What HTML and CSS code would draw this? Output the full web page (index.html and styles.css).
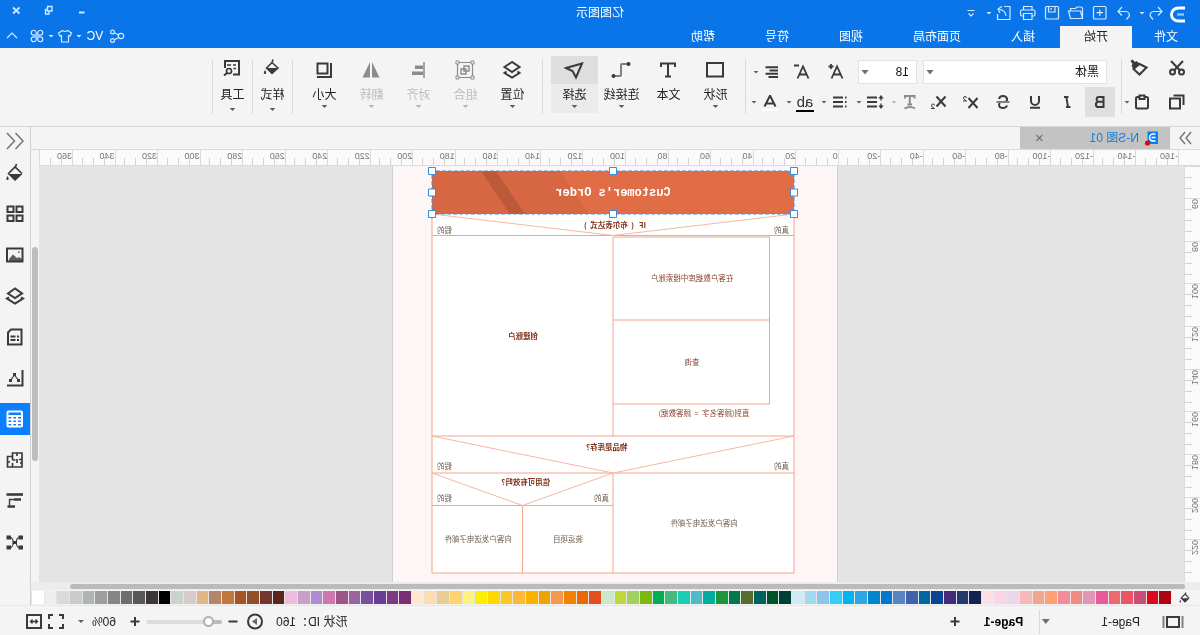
FILE: index.html
```html
<!DOCTYPE html>
<html lang="zh-CN">
<head>
<meta charset="utf-8">
<title>亿图图示</title>
<link rel="stylesheet" href="styles.css">
</head>
<body>
<div class="app">
  <header class="top">
    <div class="titlebar">
      <div class="quick">
        <svg class="logo" viewBox="0 0 21 20"><path d="M3 5h6.500a6 5.500 0 0 1 0 13H3" stroke-width="2.800"/><path class="dim" d="M4 11.500h7" stroke-width="2.400"/></svg>
        <button class="q undo" aria-label="撤销"><svg viewBox="0 0 20 20"><path d="M8 4L4 8.500L8 12.500M4.500 8.500h7.500a3.500 3.500 0 0 1 3.500 5l-2.500 3"/></svg></button>
        <button class="qd" aria-label="撤销列表"><i class="caret"></i></button>
        <button class="q" aria-label="重做"><svg viewBox="0 0 20 20"><path d="M12 4l4 4.500l-4 4M15.500 8.500H8.500a3.500 3.500 0 0 0-3.500 5L7.500 16.500"/></svg></button>
        <button class="q" aria-label="新建"><svg viewBox="0 0 20 20"><rect x="4" y="3.500" width="12.500" height="12.500" rx="1"/><path d="M10.200 6.500v6.500M7 9.700h6.500"/></svg></button>
        <button class="q" aria-label="打开"><svg viewBox="0 0 20 20"><path d="M3.500 15.500V6q0-2 2-2h3.500l1.500 1.500h5v2.500M3.500 15.500L5.500 8h12l-2 7.500z"/></svg></button>
        <button class="q" aria-label="保存"><svg viewBox="0 0 20 20"><rect x="3.500" y="3.500" width="13" height="12.500" rx="1"/><path d="M7 3.500v5.500h6.500v-5.500M11 5v2"/></svg></button>
        <button class="q" aria-label="打印"><svg viewBox="0 0 20 20"><path d="M6 7v-3.500h8.500V7M6 13H4.500q-1.500 0-1.500-1.500V8.500q0-1.500 1.500-1.500h11.500q1.500 0 1.500 1.500v3q0 1.500-1.500 1.500h-1.500M6 10.500h8.500v6H6z"/></svg></button>
        <button class="q" aria-label="导出"><svg viewBox="0 0 20 20"><path d="M10 3.500H4v13h12.500V11M8 13q0-5.500 7.500-7M12 3.500l4 2.500l-2 4"/></svg></button>
        <button class="qd" aria-label="导出列表"><i class="caret"></i></button>
        <button class="q" aria-label="自定义"><svg viewBox="0 0 20 20"><path d="M6.500 7.500h7M7.500 10.500l2.500 2.500l2.500-2.500"/></svg></button>
      </div>
      <h1 class="title">亿图图示</h1>
      <div class="win">
        <button aria-label="最小化"><svg viewBox="0 0 20 20"><path d="M7.500 12.500h5.500" stroke-width="2"/></svg></button>
        <button aria-label="还原"><svg viewBox="0 0 20 20"><path d="M7.500 6.500h4.500v4.500H7.500zM9 11.500v2.500h-3.500v-4.500h2" transform="matrix(-1 0 0 1 19 0)" stroke-width="1.300"/></svg></button>
        <button aria-label="关闭"><svg viewBox="0 0 20 20"><path d="M6.500 7.500l6.500 6M13 7.500l-6.500 6" stroke-width="1.800"/></svg></button>
      </div>
    </div>
    <nav class="menubar">
      <button class="menu file">文件</button>
      <button class="menu on">开始</button>
      <button class="menu">插入</button>
      <button class="menu">页面布局</button>
      <button class="menu">视图</button>
      <button class="menu">符号</button>
      <button class="menu">帮助</button>
      <div class="account">
        <button class="a" aria-label="分享"><svg viewBox="0 0 20 20"><circle cx="6" cy="10" r="2.700"/><circle cx="14.500" cy="6" r="1.900"/><circle cx="14.500" cy="14.500" r="1.900"/><path d="M8.500 9l4.200-2.200M8.200 11.500l4.500 2.200"/></svg></button>
        <button class="user">VC</button>
        <button class="ad" aria-label="用户菜单"><i class="caret"></i></button>
        <button class="a shirt" aria-label="主题"><svg viewBox="0 0 20 20"><path d="M7.500 4.500q2.500 2 5 0l4 2.500l-1.500 3l-1.500-.5v6.500h-7V9.500l-1.500.5l-1.500-3z"/></svg></button>
        <button class="ad" aria-label="主题列表"><i class="caret"></i></button>
        <button class="a" aria-label="应用"><svg viewBox="0 0 20 20"><path d="M9.200 9.200H6.300a2.500 2.500 0 1 1 2.900-2.900zM10.800 9.200h2.900a2.500 2.500 0 1 0-2.900-2.900zM9.200 10.800H6.300a2.500 2.500 0 1 0 2.900 2.900zM10.800 10.800h2.900a2.500 2.500 0 1 1-2.900 2.900z"/></svg></button>
        <button class="a fold" aria-label="收起"><svg viewBox="0 0 20 20"><path d="M5 12l5-5l5 5"/></svg></button>
      </div>
    </nav>
  </header>

  <section class="ribbon">
    <div class="clip">
      <div class="cliprow">
        <button class="b" aria-label="剪切"><svg viewBox="0 0 20 20"><circle cx="5.500" cy="14" r="2.500"/><circle cx="14.500" cy="14" r="2.500"/><path d="M4 3l9 9.500M16 3L7 12.500"/></svg></button>
        <button class="b" aria-label="格式刷"><svg viewBox="0 0 20 20"><path d="M2.500 9.500l7-3.500l6 5l-6 5.500z"/><path class="f" d="M9.500 5.500l3-2.500l1.500 1l2.500-2.500l2 1.500l-2 3l1 1.500l-2 4z"/></svg></button>
      </div>
      <div class="cliprow">
        <button class="b" aria-label="复制"><svg viewBox="0 0 20 20"><path d="M7 6.500h10v10H7zM3.500 13V3.500h10"/></svg></button>
        <button class="b paste" aria-label="粘贴"><svg viewBox="0 0 20 20"><rect x="4" y="5" width="12" height="11.500" rx="1.500"/><path class="w" d="M7.500 3.500h5v3.500h-5z"/></svg></button>
        <button class="d" aria-label="粘贴选项"><i class="caret"></i></button>
      </div>
    </div>
    <span class="sep"></span>
    <div class="font">
      <div class="row first">
        <label class="combo family"><select aria-label="字体"><option>黑体</option></select><i class="caret big"></i></label>
        <label class="combo size"><select aria-label="字号"><option>18</option></select><i class="caret big"></i></label>
        <button class="b wide grow" aria-label="增大字号"><svg viewBox="0 0 20 20"><path d="M3.500 16.500L9 4.500l5.500 12M5.500 12.500h7M12.500 4.500h5M15 2v5" stroke-width="1.800"/></svg></button>
        <button class="b wide" aria-label="减小字号"><svg viewBox="0 0 20 20"><path d="M3.500 16.500L9 4.500l5.500 12M5.500 12.500h7M13 3.500h5" stroke-width="1.800"/></svg></button>
        <span class="pair"><button class="b" aria-label="对齐"><svg viewBox="0 0 20 20"><path d="M4 5.200h12.500M4 8.500h8.500M4 11.800h12.500M4 15.100h9.500"/></svg></button><button class="d" aria-label="对齐选项"><i class="caret"></i></button></span>
      </div>
      <div class="row">
        <button class="b bold" aria-label="加粗"><svg viewBox="0 0 20 20"><path d="M6.500 5h4.500a2.400 2.400 0 0 1 0 4.800H6.500zM6.500 9.800h5a2.600 2.600 0 0 1 0 5.200h-5z" stroke-width="2"/></svg></button>
        <button class="b wide i" aria-label="斜体"><svg viewBox="0 0 20 20"><path d="M8.500 5h4.500M10.700 5L9 15M6.500 15h4.500" stroke-width="1.900"/></svg></button>
        <button class="b wide" aria-label="下划线"><svg viewBox="0 0 20 20"><path d="M6 4v5a4 4 0 0 0 8 0V4M5 15.800h10"/></svg></button>
        <button class="b wide" aria-label="删除线"><svg viewBox="0 0 20 20"><path d="M14 7q-.5-3-4-3t-4 3t3 3M13 11q1.500 1 .8 3T10 16T6 13.500"/><path class="g" d="M3.500 10h13"/></svg></button>
        <button class="b wide" aria-label="上标"><svg viewBox="0 0 20 20"><path d="M3.500 6l9 10M12.500 6l-9 10"/><path d="M14.500 6q0-1.500 1.500-1.500t1.500 1.500t-3 3h3.500" stroke-width="1"/></svg></button>
        <button class="b wide" aria-label="下标"><svg viewBox="0 0 20 20"><path d="M3.500 4.500l9 10M12.500 4.500l-9 10"/><path d="M14.500 13.500q0-1.500 1.500-1.500t1.500 1.500t-3 3h3.500" stroke-width="1"/></svg></button>
        <span class="pair off"><button class="b" aria-label="文字效果"><svg viewBox="0 0 20 20"><path d="M5.500 6.500v-2.500h9.500v2.500M10.200 4v8.500M8 12.500h4.500M5 16.500q5-3 10.500 0"/></svg></button><button class="d" aria-label="文字效果选项"><i class="caret"></i></button></span>
        <span class="pair"><button class="b" aria-label="行距"><svg viewBox="0 0 20 20"><path d="M8 5.500h10M8 10h10M8 14.500h10"/><path d="M4 4.500v4M4 11.500v4" stroke-width="1.400"/><path class="f" d="M4 3l2.700 3.500H1.300zM4 17l2.700-3.500H1.300z"/></svg></button><button class="d" aria-label="行距选项"><i class="caret"></i></button></span>
        <span class="pair"><button class="b" aria-label="列表"><svg viewBox="0 0 20 20"><path d="M7 5.500h10M7 10h10M7 14.500h10"/><path d="M3.500 5.500h1.500M3.500 10h1.500M3.500 14.500h1.500"/></svg></button><button class="d" aria-label="列表选项"><i class="caret"></i></button></span>
        <span class="pair"><button class="b glyph" aria-label="突出显示">ab</button><button class="d" aria-label="突出显示选项"><i class="caret"></i></button></span>
        <span class="pair"><button class="b" aria-label="字体颜色"><svg viewBox="0 0 20 20"><path d="M4.500 14.500L9.800 4h.4L15.500 14.500M6 11.500h8"/><path d="M2 18h16" stroke="#fff"/></svg></button><button class="d" aria-label="字体颜色选项"><i class="caret"></i></button></span>
      </div>
    </div>
    <span class="sep"></span>
    <div class="tools">
      <button class="tool"><svg viewBox="0 0 20 20"><rect x="2" y="3" width="16" height="13.500"/></svg>形状<i class="caret"></i></button>
      <button class="tool"><svg viewBox="0 0 20 20"><path d="M3 7V3.500h14V7M10 3.500v13M7 16.500h6"/></svg>文本</button>
      <button class="tool"><svg viewBox="0 0 20 20"><path class="g" d="M4 4h5q1 0 1 1v10q0 1 1 1h5"/><circle class="f" cx="2.500" cy="4" r="2"/><circle class="f" cx="17.500" cy="16" r="2"/></svg>连接线<i class="caret"></i></button>
      <button class="tool sel"><svg viewBox="0 0 20 20"><path d="M2 3.500l16 4.500l-6.500 3L8 17.500z"/></svg>选择<i class="caret"></i></button>
    </div>
    <span class="sep"></span>
    <div class="tools">
      <button class="tool"><svg viewBox="0 0 20 20"><path d="M10 2l7.500 5L10 12L2.500 7zM4.500 11.500l-2 1.500l7.500 4.500l7.500-4.500l-2-1.500"/></svg>位置<i class="caret"></i></button>
      <button class="tool off" disabled><svg viewBox="0 0 20 20"><path d="M2.500 2.500h15v15h-15z" stroke-width="1.200"/><path d="M6 6h5v5H6zM9 9h5v5H9z" stroke-width="1.400"/><path class="w" d="M1 1h3v3H1zM16 1h3v3h-3zM1 16h3v3H1zM16 16h3v3h-3z" stroke-width="1"/></svg>组合<i class="caret"></i></button>
      <button class="tool off" disabled><svg viewBox="0 0 20 20"><path d="M4 2v16" stroke-width="1.500"/><path d="M5 7.200h8M5 13.200h11" stroke-width="3.500"/></svg>对齐<i class="caret"></i></button>
      <button class="tool off" disabled><svg viewBox="0 0 20 20"><path class="f" d="M9 2v15.500H1.500zM11 2v15.500h7.500z"/></svg>翻转<i class="caret"></i></button>
      <button class="tool"><svg viewBox="0 0 20 20"><path d="M6.500 3.500h10v10h-10zM3 3v14h14"/></svg>大小<i class="caret"></i></button>
    </div>
    <span class="sep"></span>
    <div class="tools"><button class="tool slim"><svg viewBox="0 0 20 20"><path d="M9 1.500l1 3M3.500 10.500L10 4.500l6 6" stroke-width="1.600"/><path class="f" d="M3 10h13.500L10 16.500zM17 12q2.500 4 0 4t0-4"/></svg>样式<i class="caret"></i></button></div>
    <span class="sep"></span>
    <div class="tools"><button class="tool slim"><svg viewBox="0 0 20 20"><path d="M9 16.500H3V3h14v7" /><path d="M6 7h3M11 7h4M6 10.500h2.500" stroke-width="1.400"/><circle cx="13" cy="13" r="2.500" stroke-width="1.700"/><path d="M15 15l3 2.500"/></svg>工具<i class="caret"></i></button></div>
    <span class="sep"></span>
  </section>

  <div class="body">
    <main class="work">
      <div class="tabs">
        <button class="expand" aria-label="展开符号库"><svg viewBox="0 0 20 20"><path d="M4 4l5 6l-5 6M10 4l5 6l-5 6"/></svg></button>
        <div class="tab">
          <svg class="doc" viewBox="0 0 16 16"><path d="M2 1.500h10.500v12.500H2z" fill="#0a7cf5"/><path d="M4.500 4h2.500a3.200 3.200 0 0 1 0 7H4.500M4.500 7.500h4" fill="none" stroke="#fff" stroke-width="1.400"/><circle cx="12.500" cy="13" r="2.600" fill="#f30000"/></svg>
          <a href="#sheet">N-S图 01</a>
          <button class="close" aria-label="关闭标签">✕</button>
        </div>
      </div>
      <div class="hruler">
        <span>-160</span><span>-140</span><span>-120</span><span>-100</span><span>-80</span><span>-60</span><span>-40</span><span>-20</span><span>0</span><span>20</span><span>40</span><span>60</span><span>80</span><span>100</span><span>120</span><span>140</span><span>160</span><span>180</span><span>200</span><span>220</span><span>240</span><span>260</span><span>280</span><span>300</span><span>320</span><span>340</span><span>360</span>
      </div>
      <div class="stage">
        <div class="vruler"><span></span><span><b>60</b></span><span><b>80</b></span><span><b>100</b></span><span><b>120</b></span><span><b>140</b></span><span><b>160</b></span><span><b>180</b></span><span><b>200</b></span><span><b>220</b></span></div>
        <div class="canvas">
          <svg class="sheet" id="sheet" viewBox="0 0 892 832" preserveAspectRatio="xMidYMin meet">
            <rect class="paper" width="892" height="832"/>
            <path d="M1 0V832M891 0V832" stroke="#cfcfcf" stroke-width="2"/>
            <rect x="88" y="96" width="724" height="718" fill="#fff"/>
            <g class="ln">
              <path d="M88 96V814H812V96M88 139H812M88 540H812M88 614H812M450 679H812M450 476V540M450 614V814M631 679V814"/>
              <path class="thin" d="M88 96L450 139L812 96M88 540L450 614L812 540M450 614L631 679L812 614"/>
              <path fill="#fff" d="M137 142H450V476H137zM137 308H450"/>
            </g>
            <rect x="88" y="10" width="724" height="86" fill="#e16d46"/>
            <path d="M556 10H812V96H500z" fill="#d66742"/>
            <path d="M684 10H714L656 96H626z" fill="#bb5938"/>
            <text class="head" x="450" y="60">Customer's Order</text>
            <g class="cap">
              <text x="446" y="123">IF&nbsp;&nbsp; (&nbsp; 布尔表达式&nbsp; )</text>
              <text x="466" y="567">物品是库存？</text>
              <text x="628" y="638">信用可有效吗？</text>
              <text x="630" y="346">创建账户</text>
            </g>
            <g class="red">
              <text x="292" y="230">在客户数据库中搜索账户</text>
              <text x="292" y="398">查询</text>
              <text x="268" y="500">直到(顾客名字&nbsp; =&nbsp; 顾客数据)</text>
            </g>
            <g class="txt">
              <text x="113" y="134">真的</text><text x="787" y="134">假的</text>
              <text x="113" y="606">真的</text><text x="787" y="606">假的</text>
              <text x="473" y="670">真的</text><text x="787" y="670">假的</text>
              <text x="268" y="719">向客户发送电子邮件</text>
              <text x="540" y="751">装运项目</text>
              <text x="720" y="751">向客户发送电子邮件</text>
            </g>
            <rect class="pick" x="88" y="10" width="724" height="86"/>
            <path class="knob" d="M81 3h14v14h-14zM443 3h14v14h-14zM805 3h14v14h-14zM81 46h14v14h-14zM805 46h14v14h-14zM81 89h14v14h-14zM443 89h14v14h-14zM805 89h14v14h-14z"/>
          </svg>
        </div>
        <div class="vscroll"><i></i></div>
      </div>
      <div class="hscroll"><i></i></div>
      <div class="palette">
        <button class="pour" aria-label="填充"><svg viewBox="0 0 20 20"><path d="M9 1v3M3 10.500l7-7l7 7" stroke-width="2"/><path class="f" d="M2.500 10.500h15L10 18zM18 13q2.500 4.500 0 4.500t0-4.500"/></svg></button>
        <span class="sw"><i style="background:#b10413"></i><i style="background:#d90a1e"></i><i style="background:#c94f78"></i><i style="background:#e85565"></i><i style="background:#ea6a70"></i><i style="background:#e85a9b"></i><i style="background:#e196b6"></i><i style="background:#f08c84"></i><i style="background:#f28c98"></i><i style="background:#ffa075"></i><i style="background:#f0a88c"></i><i style="background:#f7b9b8"></i><i style="background:#ead6ea"></i><i style="background:#fed3e7"></i><i style="background:#fedfe6"></i><i style="background:#12234f"></i><i style="background:#23386b"></i><i style="background:#442a78"></i><i style="background:#0a4490"></i><i style="background:#0066a4"></i><i style="background:#4062ad"></i><i style="background:#5884c4"></i><i style="background:#0078d0"></i><i style="background:#0086cc"></i><i style="background:#2fa6e0"></i><i style="background:#00b4f0"></i><i style="background:#33ccfb"></i><i style="background:#8cc4ee"></i><i style="background:#a0daf0"></i><i style="background:#cdebf7"></i><i style="background:#004034"></i><i style="background:#00522b"></i><i style="background:#00615e"></i><i style="background:#566b2c"></i><i style="background:#00784a"></i><i style="background:#1e943c"></i><i style="background:#00aea0"></i><i style="background:#4ebcc4"></i><i style="background:#1acdb4"></i><i style="background:#46b97f"></i><i style="background:#00b050"></i><i style="background:#7db80e"></i><i style="background:#a2d062"></i><i style="background:#bfd83e"></i><i style="background:#cce8c8"></i><i style="background:#e24e1c"></i><i style="background:#ec6800"></i><i style="background:#f08300"></i><i style="background:#f3994f"></i><i style="background:#f0a300"></i><i style="background:#fdb000"></i><i style="background:#feb835"></i><i style="background:#fbc72f"></i><i style="background:#ffd800"></i><i style="background:#ffee00"></i><i style="background:#fbf37e"></i><i style="background:#ffd470"></i><i style="background:#e9cb96"></i><i style="background:#ffdcae"></i><i style="background:#ffe8d0"></i><i style="background:#7a2f74"></i><i style="background:#7d3a80"></i><i style="background:#6a3d94"></i><i style="background:#77519b"></i><i style="background:#9a659f"></i><i style="background:#9d5586"></i><i style="background:#ce78b0"></i><i style="background:#ad8dd1"></i><i style="background:#c79fc9"></i><i style="background:#ebbdda"></i><i style="background:#58261a"></i><i style="background:#74372f"></i><i style="background:#924d29"></i><i style="background:#a85225"></i><i style="background:#c2773c"></i><i style="background:#b38569"></i><i style="background:#dfb885"></i><i style="background:#d6cbc7"></i><i style="background:#c9d3cc"></i><i style="background:#000000"></i><i style="background:#3e3636"></i><i style="background:#575757"></i><i style="background:#6d6d6d"></i><i style="background:#858585"></i><i style="background:#9c9e9e"></i><i style="background:#b0b4b3"></i><i style="background:#c9cccb"></i><i style="background:#dadada"></i><i style="background:#eeeeee"></i><i style="background:#ffffff"></i></span>
      </div>
    </main>
    <aside class="side">
      <button class="more" aria-label="展开面板"><svg viewBox="0 0 20 20"><path d="M9.500 2L2 10l7.500 8M18 2l-7.500 8l7.500 8" stroke-width="1.400"/></svg></button>
      <button aria-label="填充"><svg viewBox="0 0 20 20"><path d="M8.500 1l1.500 4M3 10.500L10 4l7 7" stroke-width="1.700"/><path class="f" d="M2.500 11h14.500l-7 7zM17.500 13q2.500 4 0 4t0-4"/></svg></button>
      <button aria-label="符号"><svg viewBox="0 0 20 20"><path d="M2.500 2.500h6v5.500h-6zM11.500 2.500h6v5.500h-6zM2.500 11.500h6v5.500h-6zM11.500 11.500h6v5.500h-6z"/></svg></button>
      <button aria-label="图片"><svg viewBox="0 0 20 20"><path d="M2.500 3.500h15.500v13H2.500z"/><path class="f" d="M3 16v-2l3-2l2 1l4-3.500l4 4.500v2zM5.500 6.500h1.500v1.500H5.500z" opacity=".8"/></svg></button>
      <button aria-label="图层"><svg viewBox="0 0 20 20"><path d="M10 2.500l7 5L10 12L3 7.500zM4 11.500l-2 1l8 5l8-5l-2-1"/></svg></button>
      <button aria-label="备注"><svg viewBox="0 0 20 20"><path d="M3.500 2.500h10.500l3 3v12H3.500zM6 9.500h2M9.500 9.500h5M6 13h2M9.500 13h5"/></svg></button>
      <button aria-label="图表"><svg viewBox="0 0 20 20"><path d="M2.500 2v15.500H18"/><path d="M6 13l4.500-6l4.500 6" stroke-width="1.200"/><path class="f" d="M9 5h3v3H9zM5 11h3v3H5zM13 11h3v3h-3z"/></svg></button>
      <button class="on" aria-label="表格"><svg viewBox="0 0 20 20"><rect x="3" y="2.500" width="14.500" height="15" rx="1"/><path d="M3 7h14.500M3 10.500h14.500M3 14h14.500M8 7v10M12.700 7v10"/></svg></button>
      <button aria-label="平面图"><svg viewBox="0 0 20 20"><path d="M3 3h9.500v3.500H17.500v10.500H3zM3 9.500h3M8 3v3M8 9v4M3 13h2M12.500 6.500v3.500M9.500 10h3M12.500 13v4M15 12h2.500" stroke-width="1.700"/></svg></button>
      <button aria-label="甘特图"><svg viewBox="0 0 20 20"><path d="M2 3.500h16.500" stroke-width="2.600"/><path d="M4 8.500h7M10 15.500h7.500" stroke-width="2.600"/><path d="M11 8.500h4.500v6" stroke-width="1.400"/></svg></button>
      <button aria-label="思维导图"><svg viewBox="0 0 20 20"><path class="f" d="M2 3.500h4.500v4H2zM14 3.500h4.500v4H14zM2 13.500h4.500v4H2zM14 13.500h4.500v4H14zM8 9h4.500v3H8z"/><path d="M6 5.500q2 0 3 5q-1 5-3 5M14.500 5.500q-2 0-3 5q1 5 3 5" stroke-width="1.200"/></svg></button>
    </aside>
  </div>

  <footer class="status">
    <button class="pages" aria-label="页面视图"><svg viewBox="0 0 22 20"><path d="M5 5h12v10H5z"/><path class="g" d="M1.500 4v12M20.500 4v12"/></svg></button>
    <button class="pg">Page-1</button>
    <button class="list" aria-label="页面列表"><i class="caret big"></i></button>
    <button class="pg cur">Page-1</button>
    <button class="s" aria-label="新增页面"><svg viewBox="0 0 20 20"><path d="M10 5v9M5.500 9.500h9"/></svg></button>
    <span class="info">形状 ID：160</span>
    <button class="s" aria-label="演示"><svg viewBox="0 0 20 20"><circle cx="10" cy="9.500" r="7"/><path class="f" d="M8 6v7l5-3.500z" transform="matrix(1 0 0 1 0 0)" opacity=".75"/></svg></button>
    <button class="s" aria-label="缩小"><svg viewBox="0 0 20 20"><path d="M5.500 9.500h9"/></svg></button>
    <input class="zoom" type="range" min="0" max="100" value="13" aria-label="缩放">
    <button class="s" aria-label="放大"><svg viewBox="0 0 20 20"><path d="M10 5v9M5.500 9.500h9"/></svg></button>
    <button class="pct">60%<i class="caret"></i></button>
    <button class="s" aria-label="全屏"><svg viewBox="0 0 20 20"><path d="M7 3H3v4M13 3h4v4M7 16H3v-4M13 16h4v-4"/></svg></button>
    <button class="s" aria-label="适合窗口"><svg viewBox="0 0 20 20"><path d="M3 3h14v13H3z"/><path d="M6.500 9.500h7M8.500 7.500l-2 2l2 2M11.500 7.500l2 2l-2 2" stroke-width="1.300"/></svg></button>
  </footer>
</div>
</body>
</html>
```

FILE: styles.css
```css
* { box-sizing: border-box; }

body {
  margin: 0;
  font: 12px/16px "Liberation Sans", "Noto Sans CJK SC", sans-serif;
  color: #222;
  background: #f4f4f4;
}

button {
  margin: 0;
  padding: 0;
  border: 0;
  background: none;
  color: inherit;
  font: inherit;
  flex: none;
  display: flex;
  align-items: center;
  justify-content: center;
}

svg { display: block; flex: none; width: 20px; height: 20px; }

button svg {
  fill: none;
  stroke: #3a3a3a;
  stroke-width: 2;
}
button svg .f { fill: #3a3a3a; stroke: none; }
button svg .g { stroke: #808080; }
button svg .w { fill: #f4f4f4; }

/* The whole interface is shown mirrored, right to left. */
.app {
  height: 100vh;
  display: flex;
  flex-direction: column;
  overflow: hidden;
  transform: scaleX(-1);
}

.caret {
  flex: none;
  width: 6px;
  height: 3px;
  background: #606060;
  clip-path: polygon(0 0, 100% 0, 50% 100%);
}
.caret.big { width: 8px; height: 5px; background: #707070; }

/* Title bar and menus */
.top { background: #0975e9; color: #fff; flex: none; }
.top svg { fill: none; stroke: #d5e9ff; stroke-width: 1.2; }
.top .caret { background: #d5e9ff; }
.titlebar {
  display: grid;
  grid-template-columns: 1fr auto 1fr;
  height: 24px;
}
.quick { display: flex; align-items: center; padding-left: 12px; }
.top .logo { width: 21px; stroke: #fff; }
.logo .dim { stroke: #8ec3fb; }
.q { width: 24px; height: 24px; }
.undo { width: 22px; }
.qd { width: 9px; height: 24px; justify-content: flex-start; }
.title { margin: 0; font-size: 12px; font-weight: 400; line-height: 26px; }
.win { display: flex; justify-content: flex-end; }
.win button { width: 33px; height: 20px; }

.menubar { display: flex; height: 24px; align-items: flex-end; }
.menu { height: 22px; padding: 0 25px; }
.menu.file { padding: 0 22px; }
.menu.on { padding: 0 24px; background: #f4f4f4; color: #222; }
.account { display: flex; margin-left: auto; align-items: center; height: 24px; padding-right: 2px; }
.a { width: 20px; height: 24px; }
.user { width: 24px; height: 24px; }
.ad { width: 8px; height: 24px; }
.shirt { margin-left: 0; }
.fold { margin-left: 5px; }

/* Ribbon */
.ribbon {
  flex: none;
  display: flex;
  height: 79px;
  border-bottom: 1px solid #d6d6d6;
}
.sep { flex: none; width: 1px; height: 54px; margin-top: 12px; background: #dadada; }
.b { width: 26px; height: 30px; }
.d { width: 6px; height: 30px; }
.clip { width: 78px; padding: 3px 0 0 8px; }
.cliprow { display: flex; height: 34px; align-items: center; gap: 8px; }
.cliprow .b { width: 30px; }
.cliprow .paste { width: 24px; }
.cliprow .d { margin-left: -8px; }
.font { width: 375px; padding: 12px 0 0 6px; }
.row { display: flex; align-items: center; height: 30px; }
.row.first { height: 24px; margin: 0 0 3px 8px; }
.row .wide { width: 32px; }
.row.first .wide { width: 34px; }
.row.first .grow { margin-left: 5px; }
.row .bold { width: 30px; background: #dfdfdf; }
.row .i { margin-left: 2px; }
.pair { display: flex; margin-right: 3px; }
.off svg { stroke: #8c8c8c; }
.off svg .f { fill: #8c8c8c; }
.off .caret { background: #b8b8b8; }
.glyph { font-size: 15px; line-height: 14px; color: #333; }
.pair .glyph { width: 18px; height: 18px; margin: 7px 4px 0; border-bottom: 2px solid #000; }
.combo {
  display: flex;
  align-items: center;
  height: 24px;
  padding-left: 7px;
  background: #fff;
  border: 1px solid #e3e3e3;
}
.combo select {
  flex: 1;
  min-width: 0;
  padding: 0;
  border: 0;
  background: none;
  appearance: none;
  font: inherit;
  color: #111;
}
.combo .caret { margin-right: 2px; }
.family { width: 184px; }
.size { width: 59px; margin-left: 6px; }

.tools { display: flex; padding: 8px 8px 0 6px; }
.tool {
  width: 47px;
  height: 57px;
  flex-direction: column;
  justify-content: flex-start;
  padding-top: 4px;
  line-height: 16px;
}
.tool svg { margin-bottom: 7px; }
.tool .caret { margin-top: 2px; }
.tool.off { color: #bdbdbd; }
.tool.sel { background: linear-gradient(#dedede 28px, #ebebeb 28px); }
.tools:has(.slim) { padding: 8px 0 0; }
.tool.slim { width: 39px; padding-top: 2px; }
.slim svg { margin-bottom: 9px; }
.slim .caret { margin-top: 5px; }

/* Workspace */
.body { flex: 1; min-height: 0; display: flex; }
.work { flex: 1; min-width: 0; display: flex; flex-direction: column; }
.tabs { flex: none; display: flex; height: 23px; border-bottom: 1px solid #dadada; }
.expand { width: 30px; }
.expand svg { stroke: #707070; stroke-width: 1.3; }
.tab {
  width: 150px;
  display: flex;
  align-items: center;
  padding: 0 12px 0 10px;
  background: #c3c3c3;
}
.doc { width: 16px; height: 16px; }
.tab a { margin: 0 auto 0 5px; color: #157de0; text-decoration: none; }
.close { width: 16px; font-size: 11px; color: #666; }

.hruler {
  flex: none;
  display: grid;
  grid-template-columns: repeat(26, 1fr) 34px;
  height: 16px;
  margin-right: 8px;
  padding-left: 21px;
  background: #fafafa;
  border-bottom: 1px solid #dcdcdc;
  font-size: 9px;
  line-height: 12px;
  color: #777;
}
.hruler span {
  min-width: 0;
  border-left: 1px solid #dadada;
  background: repeating-linear-gradient(to right, transparent 0 10px, #d2d2d2 10px 11px) left bottom / 100% 7px no-repeat;
  overflow: hidden;
}
.hruler span:last-child { border-right: 1px solid #dadada; }

.stage { flex: 1; min-height: 0; display: flex; }
.vruler {
  flex: none;
  width: 16px;
  display: grid;
  grid-template-rows: 32px repeat(9, 1fr);
  background: #fafafa;
  border-right: 1px solid #dcdcdc;
  font-size: 9px;
  color: #777;
}
.vruler span {
  min-height: 0;
  overflow: hidden;
  border-top: 1px solid #dadada;
  background: repeating-linear-gradient(to bottom, transparent 0 10px, #d2d2d2 10px 11px) right top / 7px 100% no-repeat;
}
.vruler b {
  display: block;
  width: 11px;
  font-weight: 400;
  line-height: 11px;
  writing-mode: vertical-rl;
  transform: rotate(180deg);
}
.canvas {
  flex: 1;
  min-width: 0;
  display: flex;
  justify-content: center;
  padding-right: 7px;
  overflow: hidden;
  background: #e4e4e4;
}
.sheet { width: 446px; height: 416px; }
.paper { fill: #fcf7f6; }
.ln { fill: none; stroke: #f2a48c; stroke-width: 2; }
.thin { stroke: #f5b7a4; }
.sheet text { font: 15px "Noto Sans CJK SC", sans-serif; text-anchor: middle; }
.sheet .head { font: bold 24px "Liberation Mono", monospace; fill: #fff; }
.sheet .cap text { font-weight: 700; fill: #7f3218; }
.red text { fill: #8c4430; }
.txt text { fill: #6b5c48; }
.pick { fill: none; stroke: #4a8fd6; stroke-width: 2; stroke-dasharray: 8 4; }
.knob { fill: #fff; stroke: #2f8de8; stroke-width: 2; }

.vscroll { flex: none; width: 8px; padding: 81px 1px 0; background: #f4f4f4; display: flex; }
.vscroll i { flex: 1; height: 214px; border-radius: 3px; background: #bdbdbd; }
.hscroll { flex: none; height: 8px; padding: 2px 39px 1px 15px; background: #ececec; display: flex; }
.hscroll i { flex: 1; border-radius: 3px; background: #bbb; }
.palette { flex: none; display: flex; height: 15px; }
.pour { width: 29px; }
.pour svg { width: 12px; height: 12px; }
.sw { flex: 1; display: grid; grid-template-columns: repeat(90, 1fr); padding: 1px 0; }
.sw i { border-right: 1px solid #e4e4e4; }

.side {
  flex: none;
  width: 31px;
  display: flex;
  flex-direction: column;
  border-left: 1px solid #d0d0d0;
}
.side button { width: 30px; height: 32px; margin-bottom: 9px; }
.side .more { height: 28px; margin-bottom: 2px; }
.side .more svg { stroke: #707070; }
.side .on { background: #0a7fff; }
.side .on svg { stroke: #fff; }

/* Status bar */
.status {
  flex: none;
  display: flex;
  align-items: center;
  height: 30px;
  padding: 2px 23px 0 16px;
  border-top: 1px solid #e8e8e8;
}
.pages svg { width: 22px; }
.pg { margin-left: 22px; }
.list { width: 12px; height: 24px; margin-left: 50px; border-right: 1px solid #dadada; }
.cur { margin-left: 16px; font-weight: 700; color: #000; }
.status .cur + .s { margin-left: 18px; }
.info { margin-left: auto; padding-right: 10px; }
.s { width: 22px; height: 24px; }
.zoom {
  width: 76px;
  height: 14px;
  margin: 0;
  appearance: none;
  background: none;
}
.zoom::-webkit-slider-runnable-track {
  height: 4px;
  border-radius: 2px;
  background: linear-gradient(to right, #bcbcbc 14px, #dcdcdc 14px);
}
.zoom::-webkit-slider-thumb {
  appearance: none;
  width: 11px;
  height: 11px;
  margin-top: -4px;
  border: 2px solid #b0b0b0;
  border-radius: 50%;
  background: #fff;
}
.pct { margin: 0 11px 0 8px; gap: 8px; }
```
